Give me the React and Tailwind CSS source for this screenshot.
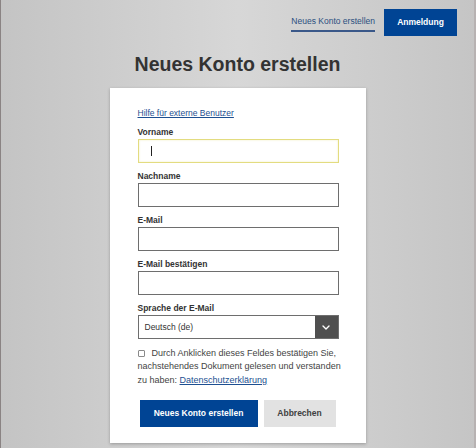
import React from "react";

const Label = ({ children }) => (
  <div className="mt-[7px] mb-px h-[12px] leading-[12px] text-[8.5px] font-bold text-[#333]">
    {children}
  </div>
);

const Field = () => (
  <div className="h-[24px] w-full border border-[#6e6e6e] bg-white" />
);

const Chevron = () => (
  <svg width="8" height="5" viewBox="0 0 8 5" fill="none">
    <path d="M1 1l3 3 3-3" stroke="white" strokeWidth="1.4" strokeLinecap="round" strokeLinejoin="round" />
  </svg>
);

export default function App() {
  return (
    <div className="h-[448px] w-full overflow-hidden border-l border-l-[#8a8383] border-r-2 border-r-[#b7b2b2] bg-linear-to-r from-[#c4c4c4] via-[#d7d7d7] to-[#c5c5c5] font-['Liberation_Sans',Arial,sans-serif]">
      {/* top bar */}
      <header className="flex items-center justify-end gap-[9px] pt-[9px] pr-[17px]">
        <a className="mt-[2px] border-b-2 border-[#3a5889] pb-[3px] text-[8.5px] leading-[11px] text-[#2b4f80]">
          Neues Konto erstellen
        </a>
        <button className="h-[27px] w-[73px] bg-[#004494] text-[8.5px] font-bold text-white">
          Anmeldung
        </button>
      </header>

      <h1 className="mt-[16px] text-center text-[19.5px] leading-[24px] font-bold text-[#333]">
        Neues Konto erstellen
      </h1>

      {/* card */}
      <div className="mx-auto mt-[12px] w-[256px] bg-white pt-[19px] pr-[27px] pb-[16px] pl-[28px] shadow-[0_1px_3px_rgba(0,0,0,0.25)]">
        <a className="block h-[12px] leading-[12px] text-[8.5px] text-[#1d4f91] underline">
          Hilfe für externe Benutzer
        </a>

        <Label>Vorname</Label>
        <div className="flex h-[24px] w-full items-center border border-[#e3dc80] bg-white pl-[12px] shadow-[inset_0_0_2px_rgba(230,220,120,0.5)]">
          <span className="h-[10px] w-px bg-[#222]" />
        </div>

        <Label>Nachname</Label>
        <Field />

        <Label>E-Mail</Label>
        <Field />

        <Label>E-Mail bestätigen</Label>
        <Field />

        <Label>Sprache der E-Mail</Label>
        <div className="flex h-[24px] w-full border border-[#6e6e6e] bg-white">
          <span className="flex flex-1 items-center pl-[6px] text-[8.5px] text-[#333]">
            Deutsch (de)
          </span>
          <span className="flex w-[23px] items-center justify-center bg-[#4f4f4f]">
            <Chevron />
          </span>
        </div>

        <p className="mt-[8px] whitespace-nowrap text-[9px] leading-[13.3px] text-[#444]">
          <span className="mr-[7px] inline-block h-[7px] w-[7px] rounded-[1px] border border-[#8a8a8a] align-[-0.5px]" />
          Durch Anklicken dieses Feldes bestätigen Sie,
          <br />
          nachstehendes Dokument gelesen und verstanden
          <br />
          zu haben: <a className="text-[#1d4f91] underline">Datenschutzerklärung</a>
        </p>

        <div className="mt-[13px] flex gap-[6px] pl-[2px]">
          <button className="h-[27px] w-[118px] bg-[#004494] text-[8.5px] font-bold text-white">
            Neues Konto erstellen
          </button>
          <button className="h-[27px] w-[72px] bg-[#e2e2e2] text-[8.5px] font-bold text-[#404040]">
            Abbrechen
          </button>
        </div>
      </div>
    </div>
  );
}
